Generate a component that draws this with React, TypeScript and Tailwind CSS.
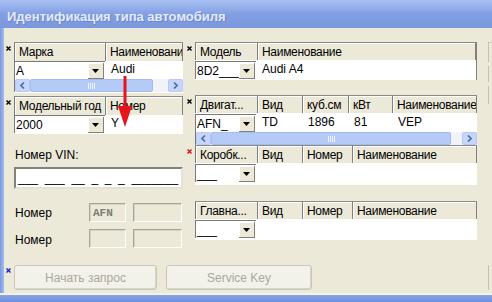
import React from 'react';

const font = "font-['Liberation_Sans',Arial,sans-serif]";

function Mark({ color = '#000' }: { color?: string }) {
    return (
        <svg className="absolute -left-[8px] top-[3px]" width="5" height="5" viewBox="0 0 5 5">
            <path d="M0.5 0.5L4.5 4.5M4.5 0.5L0.5 4.5" stroke={color} strokeWidth="1.4" />
        </svg>
    );
}

function Head({ label, w }: { label: string; w?: string }) {
    return (
        <div
            className={`${w ?? 'flex-1'} h-full flex items-center pl-[4px] tracking-[-0.3px] border-r border-[#808080] shadow-[inset_1px_1px_0_#fff] overflow-hidden whitespace-nowrap`}
        >
            {label}
        </div>
    );
}

function Dropdown({ text, w }: { text: string; w: string }) {
    return (
        <div className={`${w} h-[18px] flex bg-white border-l border-t border-[#7a7a7a]`}>
            <div className="flex-1 pl-[1px] leading-[18px] overflow-hidden whitespace-nowrap">{text}</div>
            <div className="w-[16px] h-[16px] mt-[1px] mr-[1px] bg-[#ece9d8] border-r border-b border-[#808080] shadow-[inset_1px_1px_0_#fff] flex items-center justify-center">
                <svg width="7" height="4" viewBox="0 0 7 4">
                    <path d="M0 0H7L3.5 4Z" fill="#000" />
                </svg>
            </div>
        </div>
    );
}

function Arrow({ dir }: { dir: 'l' | 'r' }) {
    return (
        <div className="w-[15px] h-full rounded-[2px] bg-[#c5d5fb] border border-[#b7c9f5] flex items-center justify-center">
            <svg width="5" height="7" viewBox="0 0 5 7">
                <path d={dir === 'l' ? 'M4 0.5L1 3.5L4 6.5' : 'M1 0.5L4 3.5L1 6.5'} stroke="#4d6aa8" strokeWidth="1.6" fill="none" />
            </svg>
        </div>
    );
}

function ScrollBar({ thumb }: { thumb: string }) {
    return (
        <div className="h-[13px] flex bg-[#f2f3f8] border-l border-[#7a7a7a]">
            <Arrow dir="l" />
            <div className="flex-1 flex">
                <div className={`${thumb} h-full rounded-[2px] bg-[#b5cbf7] border border-[#a3bbf0] flex items-center justify-center`}>
                    <div className="flex gap-[1px]">
                        <div className="w-[1px] h-[6px] bg-[#eef3ff]" />
                        <div className="w-[1px] h-[6px] bg-[#eef3ff]" />
                        <div className="w-[1px] h-[6px] bg-[#eef3ff]" />
                        <div className="w-[1px] h-[6px] bg-[#eef3ff]" />
                    </div>
                </div>
            </div>
            <Arrow dir="r" />
        </div>
    );
}

function Cell({ text, w }: { text: string; w?: string }) {
    return <div className={`${w ?? 'flex-1'} pl-[6px] leading-[16px] whitespace-nowrap`}>{text}</div>;
}

function SmallBox({ text }: { text?: string }) {
    return (
        <div className="h-[19px] border-l border-t border-[#a5a39a] border-r border-b border-r-white border-b-white shadow-[inset_1px_1px_0_#d6d3c4] font-['Liberation_Mono',monospace] text-[11px] font-bold text-[#7c7b75] pl-[3px] leading-[18px]">
            {text}
        </div>
    );
}

function Button({ label, w }: { label: string; w: string }) {
    return (
        <div className={`${w} h-[25px] flex items-center justify-center rounded-[3px] border border-[#c9c7ba] bg-[#f3f2ea] shadow-[inset_-1px_-1px_0_#d8d5c5] text-[#aca899]`}>
            {label}
        </div>
    );
}

export default function App() {
    return (
        <div className={`w-[492px] h-[302px] overflow-hidden flex flex-col bg-[#ece9d8] text-[12px] text-black ${font}`}>
            {/* Title */}
            <div className="h-[28px] shrink-0 bg-gradient-to-b from-[#a9c1f2] via-[#829fe3] to-[#7b98dd] flex items-center pl-[7px] pt-[5px]">
                <span className="text-[13px] font-bold text-[#e3ebfc] [text-shadow:1px_1px_0_#6d86c9]">
                    Идентификация типа автомобиля
                </span>
            </div>

            <div className="flex-1 flex min-w-0">
                <div className="w-[4px] shrink-0 bg-gradient-to-r from-[#7c98dd] to-[#a6bdef]" />

                <div className="flex-1 min-w-0 flex flex-col pl-[10px] pt-[14px] relative">
                    <div className="flex gap-[12px] items-start">
                        {/* Left column */}
                        <div className="w-[169px] shrink-0 flex flex-col">
                            <div className="relative border-t border-[#8a8a8a] border-b border-b-white">
                                <Mark />
                                <div className="h-[18px] flex border-l border-[#7a7a7a]">
                                    <Head label="Марка" w="w-[91px]" />
                                    <Head label="Наименование" />
                                </div>
                                <div className="h-[18px] flex bg-white">
                                    <Dropdown text="A" w="w-[91px]" />
                                    <Cell text="Audi" />
                                </div>
                                <ScrollBar thumb="w-[123px]" />
                            </div>

                            <div className="relative mt-[3px] border-t border-[#8a8a8a] border-b border-b-white">
                                <Mark />
                                <div className="h-[18px] flex border-l border-[#7a7a7a]">
                                    <Head label="Модельный год" w="w-[91px]" />
                                    <Head label="Номер" />
                                </div>
                                <div className="h-[18px] flex bg-white">
                                    <Dropdown text="2000" w="w-[91px]" />
                                    <Cell text="Y" />
                                </div>
                            </div>

                            <div className="mt-[14px] leading-[14px] pl-[1px]">Номер VIN:</div>
                            <div className="mt-[5px] h-[22px] bg-white border-2 border-[#828282] border-r-[#e4e2d6] border-b-[#e4e2d6] pl-[2px] leading-[18px] whitespace-pre">
                                ___  ___  __  _  _  _  _______
                            </div>

                            <div className="mt-[14px] flex items-center">
                                <div className="w-[75px] pl-[1px]">Номер</div>
                                <div className="w-[37px]"><SmallBox text="AFN" /></div>
                                <div className="w-[49px] ml-[7px]"><SmallBox /></div>
                            </div>
                            <div className="mt-[5px] flex items-center">
                                <div className="w-[75px] pl-[1px] pt-[4px]">Номер</div>
                                <div className="w-[37px]"><SmallBox /></div>
                                <div className="w-[49px] ml-[7px]"><SmallBox /></div>
                            </div>
                        </div>

                        {/* Right column */}
                        <div className="w-[282px] shrink-0 flex flex-col">
                            <div className="relative border-t border-[#8a8a8a] border-r border-r-[#808080]">
                                <Mark />
                                <div className="h-[17px] flex border-l border-[#7a7a7a]">
                                    <Head label="Модель" w="w-[62px]" />
                                    <Head label="Наименование" />
                                </div>
                                <div className="h-[20px] flex bg-white pt-[1px]">
                                    <Dropdown text="8D2___" w="w-[61px]" />
                                    <Cell text="Audi A4" />
                                </div>
                            </div>

                            <div className="relative mt-[15px] border-t border-[#8a8a8a]">
                                <Mark />
                                <div className="h-[17px] flex border-l border-[#7a7a7a]">
                                    <Head label="Двигат..." w="w-[62px]" />
                                    <Head label="Вид" w="w-[45px]" />
                                    <Head label="куб.см" w="w-[46px]" />
                                    <Head label="кВт" w="w-[44px]" />
                                    <Head label="Наименование" />
                                </div>
                                <div className="h-[19px] flex bg-white pt-[1px]">
                                    <Dropdown text="AFN_" w="w-[61px]" />
                                    <Cell text="TD" w="w-[46px]" />
                                    <Cell text="1896" w="w-[46px]" />
                                    <Cell text="81" w="w-[44px]" />
                                    <Cell text="VEP" />
                                </div>
                                <ScrollBar thumb="w-[240px]" />
                            </div>
                            <div className="relative border-t border-[#8a8a8a] border-b border-b-white">
                                <Mark color="#e01010" />
                                <div className="h-[17px] flex border-l border-[#7a7a7a]">
                                    <Head label="Коробк..." w="w-[62px]" />
                                    <Head label="Вид" w="w-[45px]" />
                                    <Head label="Номер" w="w-[50px]" />
                                    <Head label="Наименование" />
                                </div>
                                <div className="h-[21px] flex bg-white pt-[1px]">
                                    <Dropdown text="___" w="w-[61px]" />
                                </div>
                            </div>

                            <div className="relative mt-[16px] border-t border-[#8a8a8a] border-b border-b-white">
                                <div className="h-[17px] flex border-l border-[#7a7a7a]">
                                    <Head label="Главна..." w="w-[62px]" />
                                    <Head label="Вид" w="w-[45px]" />
                                    <Head label="Номер" w="w-[50px]" />
                                    <Head label="Наименование" />
                                </div>
                                <div className="h-[20px] flex bg-white pt-[1px]">
                                    <Dropdown text="___" w="w-[61px]" />
                                </div>
                            </div>
                        </div>

                        {/* cut-off controls at right edge */}
                        <div className="flex flex-col -ml-[1px] gap-[4px]">
                            <div className="w-[3px] h-[20px] border-l border-t border-[#c6c3b4]" />
                            <div className="w-[3px] h-[16px] border-l border-[#c6c3b4]" />
                            <div className="w-[3px] h-[18px] border-l border-[#c6c3b4]" />
                        </div>
                    </div>

                    {/* Buttons */}
                    <div className="relative mt-[16px] flex gap-[9px] items-center">
                        <Mark color="#1020d0" />
                        <Button label="Начать запрос" w="w-[143px]" />
                        <Button label="Service Key" w="w-[146px]" />
                        <div className="ml-auto mr-[1px] w-[3px] h-[25px] border-l border-[#c6c3b4]" />
                    </div>

                    {/* red arrow */}
                    <svg className="absolute left-[113px] top-[48px]" width="16" height="52" viewBox="0 0 16 52">
                        <rect x="6.5" y="0" width="3" height="34" fill="#e8141b" />
                        <path d="M1 30H15L8 51Z" fill="#e8141b" />
                    </svg>
                </div>
            </div>

            <div className="h-[2px] bg-white/40" />
            <div className="h-[7px] shrink-0 bg-gradient-to-b from-[#89a4e6] to-[#6f8fdb]" />
        </div>
    );
}
